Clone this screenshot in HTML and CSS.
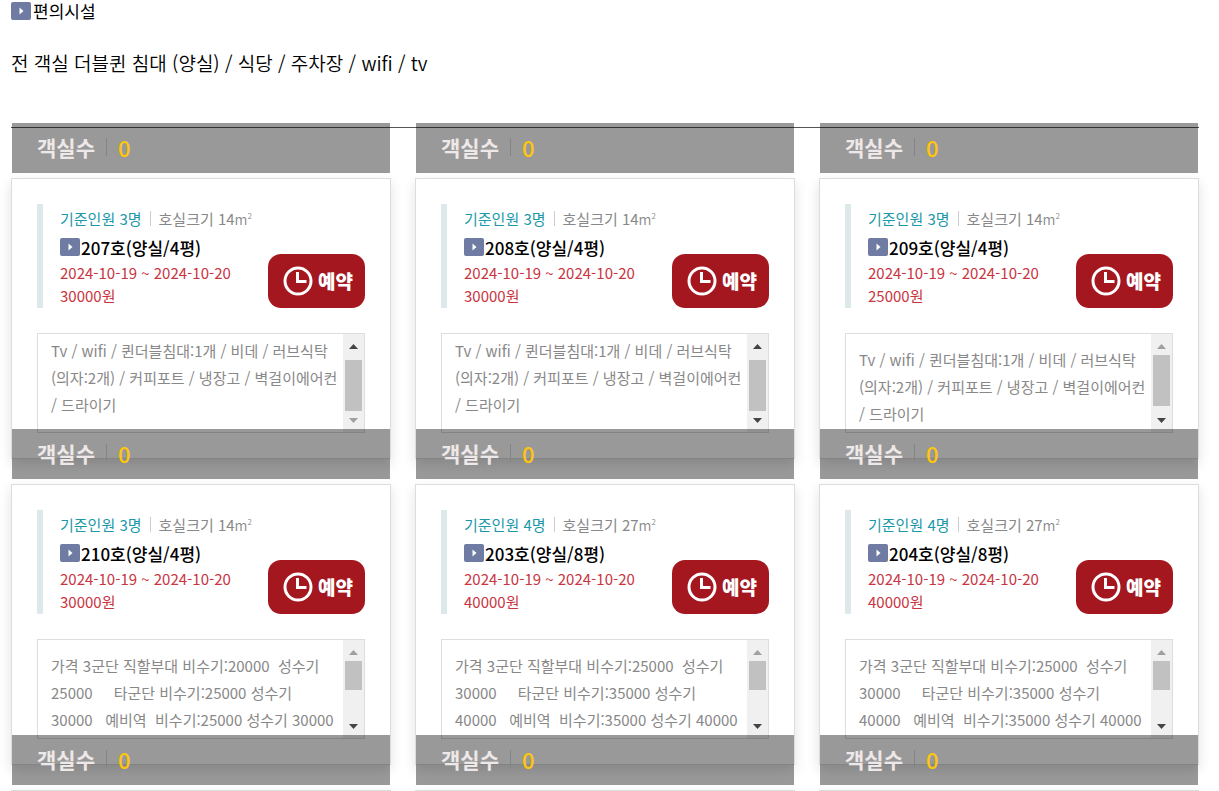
FILE: index.html
```html
<!DOCTYPE html>
<html lang="ko">
<head>
<meta charset="utf-8">
<title>편의시설</title>
<link rel="stylesheet" href="styles.css">
</head>
<body>
<svg class="defs" aria-hidden="true">
  <symbol id="play" viewBox="0 0 20 18"><rect width="20" height="18" rx="2" fill="#6f7ba3"/><path d="M8.500 5.500v7l4-3.500z" fill="#fff"/></symbol>
  <symbol id="clock" viewBox="0 0 30 30"><circle cx="15" cy="15" r="13" fill="none" stroke="#fff" stroke-width="3"/><path d="M14.500 6V15.500H23.500" fill="none" stroke="#fff" stroke-width="3"/></symbol>
  <symbol id="up" viewBox="0 0 9 5"><path d="M0 5L4.500 0L9 5z" fill="currentColor"/></symbol>
  <symbol id="down" viewBox="0 0 9 5"><path d="M0 0L4.500 5L9 0z" fill="currentColor"/></symbol>
</svg>
<main class="page">
  <h2 class="heading"><svg class="play"><use href="#play"/></svg>편의시설</h2>
  <p class="intro">전 객실 더블퀸 침대 (양실) / 식당 / 주차장 / wifi / tv</p>
  <hr class="rule">
  <ul class="rooms">
    <li class="room">
      <div class="bar"><strong>객실수</strong><span class="count">0</span></div>
      <article class="card">
        <div class="summary">
          <div class="info">
            <p class="specs"><span class="base">기준인원 3명</span><span class="size">호실크기 14<small>m<sup>2</sup></small></span></p>
            <h3 class="name"><svg class="play"><use href="#play"/></svg>207호(양실/4평)</h3>
            <p class="price">2024-10-19 ~ 2024-10-20<br>30000원</p>
          </div>
          <button class="book" type="button"><svg class="clock"><use href="#clock"/></svg>예약</button>
        </div>
        <div class="detail detail-end">
          <p class="text">Tv / wifi / 퀸더블침대:1개 / 비데 / 러브식탁<br>(의자:2개) / 커피포트 / 냉장고 / 벽걸이에어컨<br>/ 드라이기</p>
          <div class="track"><svg class="arrow"><use href="#up"/></svg><i class="thumb"></i><svg class="arrow arrow-off"><use href="#down"/></svg></div>
        </div>
      </article>
    </li>
    <li class="room">
      <div class="bar"><strong>객실수</strong><span class="count">0</span></div>
      <article class="card">
        <div class="summary">
          <div class="info">
            <p class="specs"><span class="base">기준인원 3명</span><span class="size">호실크기 14<small>m<sup>2</sup></small></span></p>
            <h3 class="name"><svg class="play"><use href="#play"/></svg>208호(양실/4평)</h3>
            <p class="price">2024-10-19 ~ 2024-10-20<br>30000원</p>
          </div>
          <button class="book" type="button"><svg class="clock"><use href="#clock"/></svg>예약</button>
        </div>
        <div class="detail detail-end">
          <p class="text">Tv / wifi / 퀸더블침대:1개 / 비데 / 러브식탁<br>(의자:2개) / 커피포트 / 냉장고 / 벽걸이에어컨<br>/ 드라이기</p>
          <div class="track"><svg class="arrow"><use href="#up"/></svg><i class="thumb"></i><svg class="arrow"><use href="#down"/></svg></div>
        </div>
      </article>
    </li>
    <li class="room">
      <div class="bar"><strong>객실수</strong><span class="count">0</span></div>
      <article class="card">
        <div class="summary">
          <div class="info">
            <p class="specs"><span class="base">기준인원 3명</span><span class="size">호실크기 14<small>m<sup>2</sup></small></span></p>
            <h3 class="name"><svg class="play"><use href="#play"/></svg>209호(양실/4평)</h3>
            <p class="price">2024-10-19 ~ 2024-10-20<br>25000원</p>
          </div>
          <button class="book" type="button"><svg class="clock"><use href="#clock"/></svg>예약</button>
        </div>
        <div class="detail">
          <p class="text">Tv / wifi / 퀸더블침대:1개 / 비데 / 러브식탁<br>(의자:2개) / 커피포트 / 냉장고 / 벽걸이에어컨<br>/ 드라이기</p>
          <div class="track"><svg class="arrow arrow-off"><use href="#up"/></svg><i class="thumb"></i><svg class="arrow"><use href="#down"/></svg></div>
        </div>
      </article>
    </li>
    <li class="room">
      <div class="bar"><strong>객실수</strong><span class="count">0</span></div>
      <article class="card">
        <div class="summary">
          <div class="info">
            <p class="specs"><span class="base">기준인원 3명</span><span class="size">호실크기 14<small>m<sup>2</sup></small></span></p>
            <h3 class="name"><svg class="play"><use href="#play"/></svg>210호(양실/4평)</h3>
            <p class="price">2024-10-19 ~ 2024-10-20<br>30000원</p>
          </div>
          <button class="book" type="button"><svg class="clock"><use href="#clock"/></svg>예약</button>
        </div>
        <div class="detail detail-long">
          <p class="text">가격 3군단 직할부대 비수기:20000&nbsp; 성수기<br>25000&nbsp; &nbsp; &nbsp;타군단 비수기:25000 성수기<br>30000&nbsp; &nbsp;예비역&nbsp; 비수기:25000 성수기 30000</p>
          <div class="track"><svg class="arrow arrow-off"><use href="#up"/></svg><i class="thumb"></i><svg class="arrow"><use href="#down"/></svg></div>
        </div>
      </article>
    </li>
    <li class="room">
      <div class="bar"><strong>객실수</strong><span class="count">0</span></div>
      <article class="card">
        <div class="summary">
          <div class="info">
            <p class="specs"><span class="base">기준인원 4명</span><span class="size">호실크기 27<small>m<sup>2</sup></small></span></p>
            <h3 class="name"><svg class="play"><use href="#play"/></svg>203호(양실/8평)</h3>
            <p class="price">2024-10-19 ~ 2024-10-20<br>40000원</p>
          </div>
          <button class="book" type="button"><svg class="clock"><use href="#clock"/></svg>예약</button>
        </div>
        <div class="detail detail-long">
          <p class="text">가격 3군단 직할부대 비수기:25000&nbsp; 성수기<br>30000&nbsp; &nbsp; &nbsp;타군단 비수기:35000 성수기<br>40000&nbsp; &nbsp;예비역&nbsp; 비수기:35000 성수기 40000</p>
          <div class="track"><svg class="arrow arrow-off"><use href="#up"/></svg><i class="thumb"></i><svg class="arrow"><use href="#down"/></svg></div>
        </div>
      </article>
    </li>
    <li class="room">
      <div class="bar"><strong>객실수</strong><span class="count">0</span></div>
      <article class="card">
        <div class="summary">
          <div class="info">
            <p class="specs"><span class="base">기준인원 4명</span><span class="size">호실크기 27<small>m<sup>2</sup></small></span></p>
            <h3 class="name"><svg class="play"><use href="#play"/></svg>204호(양실/8평)</h3>
            <p class="price">2024-10-19 ~ 2024-10-20<br>40000원</p>
          </div>
          <button class="book" type="button"><svg class="clock"><use href="#clock"/></svg>예약</button>
        </div>
        <div class="detail detail-long">
          <p class="text">가격 3군단 직할부대 비수기:25000&nbsp; 성수기<br>30000&nbsp; &nbsp; &nbsp;타군단 비수기:35000 성수기<br>40000&nbsp; &nbsp;예비역&nbsp; 비수기:35000 성수기 40000</p>
          <div class="track"><svg class="arrow arrow-off"><use href="#up"/></svg><i class="thumb"></i><svg class="arrow"><use href="#down"/></svg></div>
        </div>
      </article>
    </li>
    <li class="room"><div class="bar"><strong>객실수</strong><span class="count">0</span></div><article class="card"></article></li>
    <li class="room"><div class="bar"><strong>객실수</strong><span class="count">0</span></div><article class="card"></article></li>
    <li class="room"><div class="bar"><strong>객실수</strong><span class="count">0</span></div><article class="card"></article></li>
  </ul>
</main>
</body>
</html>
```

FILE: styles.css
```css
* { box-sizing: border-box; }
body { margin: 0; background: #fff; color: #000; font-family: "Noto Sans CJK KR", "Noto Sans", sans-serif; font-size: 15px; }
h2, h3, p, ul { margin: 0; padding: 0; }
svg { display: block; flex: none; }
.defs { position: absolute; width: 0; height: 0; }
.page { height: 100vh; overflow: hidden; padding: 0 20px 0 11px; }
.play { width: 20px; height: 18px; }
.heading { display: flex; align-items: center; gap: 2px; height: 22px; font-size: 17px; line-height: 20px; font-weight: 400; }
.intro { margin-top: 26px; font-size: 19px; line-height: 30px; font-weight: 350; }
.rule { margin: 49px 0 0; border: 0; height: 1px; background: #555; }
.rooms { display: grid; grid-template-columns: repeat(3, minmax(0, 1fr)); column-gap: 24px; margin-top: -5px; list-style: none; }
.room { margin-bottom: -30px; }
.bar { position: relative; z-index: 1; display: flex; align-items: center; height: 50px; margin: 0 1px 5px; padding: 0 25px 2px; background: rgba(0, 0, 0, .4); color: #eee8e8; font-size: 21px; line-height: 30px; }
.bar strong { font-weight: 700; }
.count { display: flex; align-items: center; color: #ffc60b; font-size: 22px; font-weight: 500; }
.count::before { content: ""; width: 1px; height: 18px; margin: 0 11px; background: #848484; }
.card { padding: 25px; border: 1px solid #ddd; background: #fff; box-shadow: 0 5px 12px rgba(0, 0, 0, .12); }
.summary { display: flex; justify-content: space-between; align-items: flex-end; height: 104px; padding-left: 17px; border-left: 6px solid #dce8e9; }
.info { align-self: flex-start; white-space: nowrap; }
.specs { display: flex; align-items: center; height: 29px; color: #888; }
.base { color: #1b98a9; }
.size { display: flex; align-items: center; }
.size::before { content: ""; width: 1px; height: 15px; margin: 0 8px; background: #ccc; }
.size small { font-size: 14px; font-weight: 350; }
.size sup { font-size: 8px; line-height: 1; vertical-align: 6px; }
.name { display: flex; align-items: center; gap: 1px; height: 28px; font-size: 17px; font-weight: 500; }
.price { color: #c9353f; line-height: 23px; }
.book { display: flex; align-items: center; justify-content: center; gap: 5px; width: 97px; height: 54px; flex: none; padding: 0 0 0 3px; border: 0; border-radius: 13px; background: #a4171f; color: #fff; font: 900 19px/28px "Noto Sans CJK KR", sans-serif; }
.clock { width: 30px; height: 30px; }
.detail { display: flex; justify-content: space-between; height: 100px; margin-top: 25px; border: 1px solid #ddd; overflow: hidden; }
.text { padding: 12px 0 0 13px; color: #888; line-height: 27px; white-space: nowrap; }
.detail-end .text { padding-top: 3px; }
.track { display: flex; flex-direction: column; align-items: center; width: 21px; flex: none; padding: 10px 0 9px; background: #f0f0f0; }
.arrow { width: 9px; height: 5px; color: #444; }
.arrow-off { color: #a0a0a0; }
.thumb { width: 17px; height: 51px; margin: 6px 0 auto; background: #c1c1c1; }
.detail-end .thumb { margin-top: 11px; }
.detail-long .thumb { height: 29px; }
```
